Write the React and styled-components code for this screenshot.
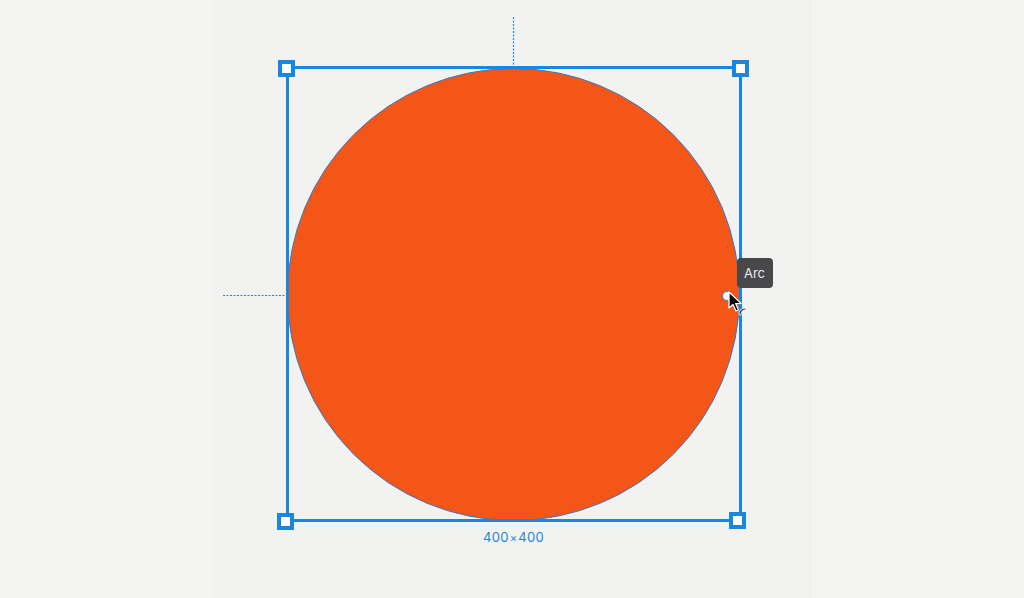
import React from 'react';
import styled, { createGlobalStyle } from 'styled-components';

const GlobalStyle = createGlobalStyle`
  html, body {
    margin: 0;
    padding: 0;
    background: #f4f5f3;
    font-family: Inter, "Noto Sans", sans-serif;
  }
`;

const Page = styled.div`
  width: 1024px;
  height: 598px;
  display: flex;
  justify-content: center;
  overflow: hidden;
`;

const Canvas = styled.div`
  position: relative;
  width: 598px;
  height: 598px;
  margin-left: -2px;
  background: #f2f3f1;
  border-right: 1px solid #ecedeb;
`;

// selection frame, handles sit on its corners
const Selection = styled.div`
  position: absolute;
  left: 74px;
  top: 66px;
  width: 456px;
  height: 456px;
  border: 3px solid #1a86de;
  box-sizing: border-box;
`;

const Ellipse = styled.div`
  position: absolute;
  left: 75px;
  top: 68px;
  width: 453px;
  height: 453px;
  border-radius: 50%;
  background: #f45618;
  border: 1px solid #3b78c4;
  box-sizing: border-box;
`;

const Handle = styled.div`
  position: absolute;
  left: ${p => p.$x - 8}px;
  top: ${p => p.$y - 8}px;
  width: 17px;
  height: 17px;
  background: #ffffff;
  border: 4px solid #1a86de;
  box-sizing: border-box;
`;

// snapping guides drawn as dashed lines
const Guides = styled.svg`
  position: absolute;
  left: 0;
  top: 0;
  pointer-events: none;
`;

const Tooltip = styled.div`
  position: absolute;
  left: 525px;
  top: 258px;
  width: 36px;
  height: 30px;
  background: #48484a;
  border-radius: 4px;
  color: #ececec;
  font-size: 13px;
  display: flex;
  align-items: center;
  justify-content: center;
`;

const ArcKnob = styled.div`
  position: absolute;
  left: 510px;
  top: 291px;
  width: 10px;
  height: 10px;
  border-radius: 50%;
  background: #ffffff;
  border: 1.5px solid #2d7fd0;
  box-sizing: border-box;
`;

const Cursor = styled.svg`
  position: absolute;
  left: 515px;
  top: 290px;
`;

const SizeLabel = styled.div`
  position: absolute;
  left: 252px;
  width: 100px;
  top: 529px;
  text-align: center;
  color: #1a86de;
  font-size: 13px;
  letter-spacing: 0.3px;
`;

const Times = styled.span`
  font-size: 11px;
  margin: 0 1px;
`;

export default function App() {
  return (
    <>
      <GlobalStyle />
      <Page>
        <Canvas>
          <Guides width="598" height="598">
            <line x1="301.5" y1="17" x2="301.5" y2="66" stroke="#2a84d4" strokeWidth="1.2" strokeDasharray="2 1.5" />
            <line x1="11" y1="295.5" x2="73" y2="295.5" stroke="#2a84d4" strokeWidth="1.2" strokeDasharray="2 1.5" />
          </Guides>
          <Ellipse />
          <Selection />
          <Handle $x={74} $y={68} />
          <Handle $x={528} $y={68} />
          <Handle $x={73} $y={521} />
          <Handle $x={525} $y={520} />
          <Tooltip>Arc</Tooltip>
          <ArcKnob />
          <Cursor width="22" height="30" viewBox="0 0 22 30">
            <path d="M2 2 L2 18 L6 14.5 L9 21 L11.5 20 L8.6 13.6 L14 13.4 Z" fill="#000" stroke="#fff" strokeWidth="1.3" strokeLinejoin="round" />
            <path d="M13 24 A5 5 0 0 1 18 19" fill="none" stroke="#fff" strokeWidth="3" strokeLinecap="round" />
            <path d="M13 24 A5 5 0 0 1 18 19" fill="none" stroke="#222" strokeWidth="1.2" strokeLinecap="round" />
          </Cursor>
          <SizeLabel>400<Times>×</Times>400</SizeLabel>
        </Canvas>
      </Page>
    </>
  );
}
